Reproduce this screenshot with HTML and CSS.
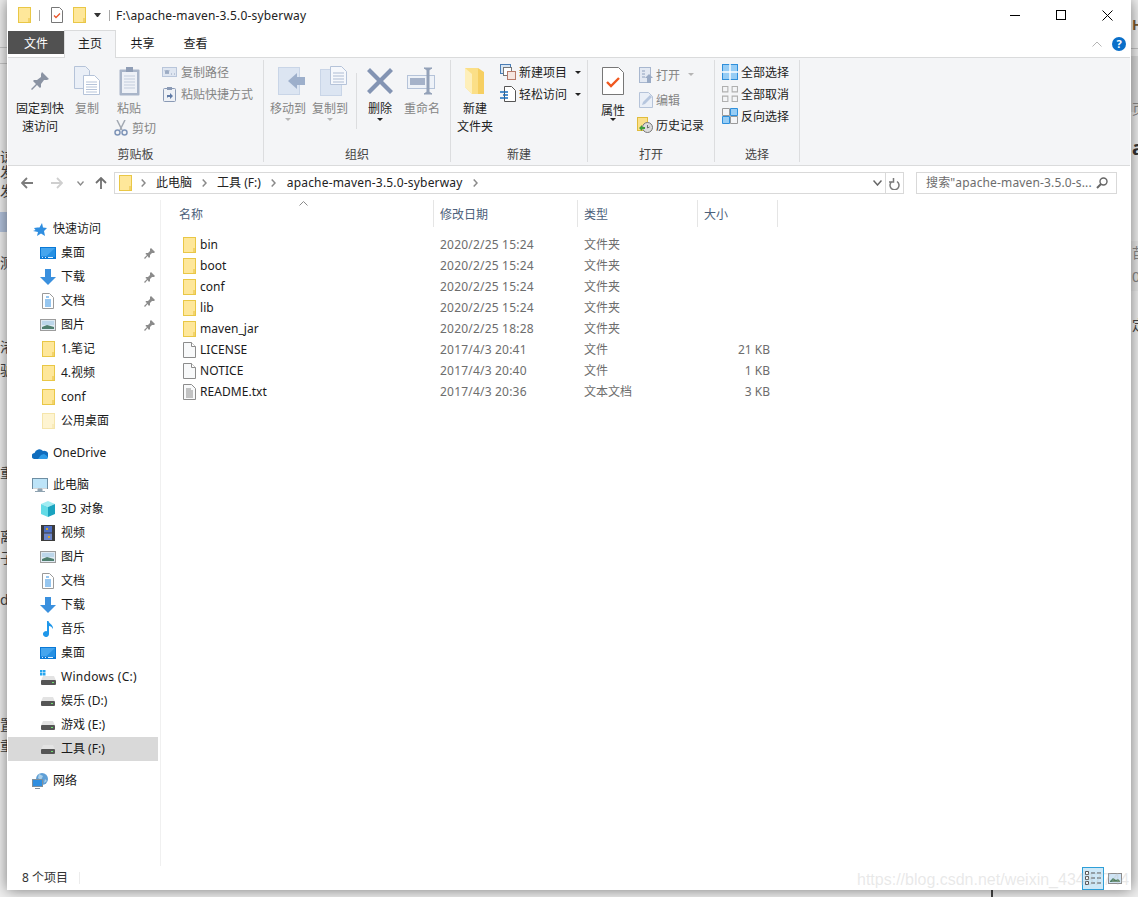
FILE: index.html
```html
<!DOCTYPE html>
<html lang="zh">
<head>
    <meta charset="utf-8">
    <title>apache-maven-3.5.0-syberway</title>
    <link rel="stylesheet" href="styles.css">
</head>
<body>
    <svg class="sprite" width="0" height="0">
        <symbol id="i-folder" viewBox="0 0 13 16"><rect x=".5" y=".5" width="12" height="15" fill="#fee79a" stroke="#e9c746"/><rect x="10" y="11" width="2" height="4" fill="#f3d36b"/></symbol>
        <symbol id="i-file" viewBox="0 0 13 16"><path d="M.5.5h8l4 4v11H.5z" fill="#f8f9fa" stroke="#8c8c8c"/><path d="M8.5.5v4h4" fill="#fff" stroke="#8c8c8c"/></symbol>
        <symbol id="i-txt" viewBox="0 0 13 16"><path d="M.5.5h8l4 4v11H.5z" fill="#f8f9fa" stroke="#8c8c8c"/><path d="M3 5h5M3 7h7M3 9h7M3 11h7M3 13h7" stroke="#8c8c8c"/></symbol>
        <symbol id="i-check" viewBox="0 0 12 16"><path d="M.5.5h8l3 3v12H.5z" fill="#fff" stroke="#777"/><path d="M3 8.5l2 2 4-4" fill="none" stroke="#e9552a" stroke-width="1.3"/></symbol>
        <symbol id="i-pin" viewBox="0 0 20 20"><path d="M12 1l7 7-2 1-3 0-3 4 0 3-1 1-3-3-5 5-1-1 5-5-3-3 1-1 3 0 4-3 0-3z" fill="#8a93a3"/></symbol>
        <symbol id="i-pin-sm" viewBox="0 0 11 11"><path d="M7 0l4 4-1 1H8L6 7v2L5 10 3.500 8 1 11 0 10l3-3L1.500 6 2 5h2l2-2V1z" fill="#8b8b8b"/></symbol>
        <symbol id="i-copy" viewBox="0 0 26 29"><path d="M.5.5h11l4 4v18H.5z" fill="#eaeff7" stroke="#b5c3d9"/><path d="M9.500 9.500h11l5 5v14h-16z" fill="#fff" stroke="#b5c3d9"/><path d="M12 16h11M12 18.500h11M12 21h11M12 23.500h11M12 26h11" stroke="#b5c3d9"/></symbol>
        <symbol id="i-paste" viewBox="0 0 21 30"><rect x=".5" y="3.500" width="20" height="26" rx="1" fill="#a9b5c9"/><rect x="3" y="6" width="15" height="21" fill="#eef1f7"/><path d="M5 10h11M5 13h11M5 16h11M5 19h11M5 22h11" stroke="#c3cddd"/><rect x="7" y="1" width="7" height="5" fill="#8f9db5"/></symbol>
        <symbol id="i-scissors" viewBox="0 0 14 16"><path d="M3 0l5 10M11 0L6 10" stroke="#a3a9b3" stroke-width="1.500"/><circle cx="3.500" cy="12.500" r="2.500" fill="none" stroke="#7f95b8" stroke-width="1.500"/><circle cx="10.500" cy="12.500" r="2.500" fill="none" stroke="#7f95b8" stroke-width="1.500"/></symbol>
        <symbol id="i-path" viewBox="0 0 15 10"><rect x=".5" y=".5" width="14" height="9" fill="#dfe6f1" stroke="#b8c5da"/><path d="M3 3l1 4 1-4 1 4 1-4M9 7h1M12 7h1" fill="none" stroke="#8495b2" stroke-width=".8"/></symbol>
        <symbol id="i-shortcut" viewBox="0 0 13 16"><rect x=".5" y="2.500" width="12" height="13" rx="1" fill="#eef1f6" stroke="#8a9ab5"/><rect x="4" y="1" width="5" height="3" fill="#8a9ab5"/><path d="M4 12V9h3V7l3 3-3 3v-2H5z" fill="#5f7aa6"/></symbol>
        <symbol id="i-move" viewBox="0 0 27 28"><rect x=".5" y=".5" width="21" height="27" fill="#dce5f2" stroke="#c9d5e7"/><path d="M10 14l9-8v4h8v8h-8v4z" fill="#9dafcb"/></symbol>
        <symbol id="i-copyto" viewBox="0 0 27 30"><rect x=".5" y="3.500" width="21" height="26" fill="#dce5f2" stroke="#c9d5e7"/><path d="M10.500.5h11l5 5v13h-16z" fill="#f6f8fc" stroke="#b5c3d9"/><path d="M13 7h11M13 10h11M13 13h11M13 16h11" stroke="#aebcd3"/></symbol>
        <symbol id="i-delete" viewBox="0 0 26 26"><path d="M3 0l10 10L23 0l3 3-10 10 10 10-3 3-10-10L3 26l-3-3 10-10L0 3z" fill="#8394b3"/></symbol>
        <symbol id="i-rename" viewBox="0 0 30 28"><rect x=".5" y="8.500" width="27" height="13" fill="#eef2f8" stroke="#b5c3d9"/><rect x="3" y="11" width="15" height="7" fill="#a5b2c9"/><path d="M17 1h8l-3 2v22l3 2h-8l3-2V3z" fill="#93a1b8" stroke="#93a1b8"/></symbol>
        <symbol id="i-newfolder" viewBox="0 0 20 28"><path d="M0 1h13v4h6v22H7L0 20z" fill="#fbdf87"/><path d="M13 1l6 4v22h-6z" fill="#f6cf62"/><path d="M0 1l7 6v20L0 20z" fill="#feefba"/></symbol>
        <symbol id="i-newitem" viewBox="0 0 16 16"><rect x=".5" y=".5" width="10" height="9" fill="#d8e6f4" stroke="#4a7db5"/><rect x="3.500" y="3.500" width="8" height="8" fill="#fff" stroke="#777"/><rect x="7.500" y="7.500" width="8" height="8" fill="#f6e6e0" stroke="#b87b6a"/></symbol>
        <symbol id="i-easy" viewBox="0 0 16 16"><path d="M4.500.5h7l4 4v11h-11z" fill="#fff" stroke="#555"/><path d="M0 6h8M3 9h5M0 12h8" stroke="#1a6fc0" stroke-width="1.300"/></symbol>
        <symbol id="i-props" viewBox="0 0 22 28"><path d="M.5.5h16l5 5v22H.5z" fill="#fff" stroke="#777"/><path d="M5 15l4 4 8-8" fill="none" stroke="#f0581f" stroke-width="2.400"/></symbol>
        <symbol id="i-open" viewBox="0 0 14 16"><rect x=".5" y=".5" width="11" height="15" fill="#e3e9f3" stroke="#a8b7cf"/><path d="M3 4h3M3 7h3M3 10h3" stroke="#8ea0bd"/><path d="M10 7l4 4h-2v5H8v-5H6z" fill="#9aabc6"/></symbol>
        <symbol id="i-edit" viewBox="0 0 14 16"><path d="M.5.5h9l4 4v11H.5z" fill="#eaeff7" stroke="#b5c3d9"/><path d="M3 13l1-3 7-7 2 2-7 7z" fill="#b6c6de"/></symbol>
        <symbol id="i-history" viewBox="0 0 16 16"><rect x=".5" y=".5" width="10" height="13" fill="#fbe08a" stroke="#e0bc3d"/><circle cx="10.500" cy="10.500" r="5" fill="#ddd" stroke="#777"/><path d="M10.500 8v3l2-1" fill="none" stroke="#555" stroke-width=".8"/><path d="M2 11l3-3v2h3v2H5v2z" fill="#3e9e3a"/></symbol>
        <symbol id="i-selall" viewBox="0 0 16 16"><rect x=".5" y=".5" width="15" height="15" fill="#97cdf5" stroke="#2f8fdb"/><path d="M8 0v16M0 8h16" stroke="#fff" stroke-width="1.400"/></symbol>
        <symbol id="i-selnone" viewBox="0 0 15 15"><path d="M.5.5h5v5h-5zM9.500.5h5v5h-5zM.5 9.500h5v5h-5zM9.500 9.500h5v5h-5z" fill="none" stroke="#b0b0b0"/></symbol>
        <symbol id="i-selinv" viewBox="0 0 16 16"><path d="M8.500.5h7v7h-7z" fill="#97cdf5" stroke="#2f8fdb"/><path d="M.5 8.500h7v7h-7z" fill="#97cdf5" stroke="#2f8fdb"/><path d="M.5.5h7v7h-7zM8.500 8.500h7v7h-7z" fill="none" stroke="#9a9a9a"/></symbol>
        <symbol id="i-chev" viewBox="0 0 5 8"><path d="M.7.5L4 4 .7 7.500" fill="none" stroke="#8a8a8a" stroke-width="1.500"/></symbol>
        <symbol id="i-search" viewBox="0 0 12 12"><circle cx="7.500" cy="4.500" r="3.500" fill="none" stroke="#666" stroke-width="1.400"/><path d="M5 7l-4 4" stroke="#666" stroke-width="2"/></symbol>
        <symbol id="i-star" viewBox="0 0 14 13"><path d="M9 0l1 4.500 4 .5-3 3 1 5-4-2.500L4 13l1-4-5-1 2.500-1L1 5l3.500-.5h2z" fill="#2f8ee0"/></symbol>
        <symbol id="i-desktop" viewBox="0 0 16 12"><rect width="16" height="12" fill="#0a79d6"/><path d="M1 1h14v8.500H1z" fill="#45a5ee"/><path d="M15 1v8.500H6z" fill="#2590e3"/><path d="M2 10.500h1M5 10.500h1M8 10.500h5" stroke="#e3f2ff"/></symbol>
        <symbol id="i-down" viewBox="0 0 16 16"><path d="M5 0h6v8h5l-8 8-8-8h5z" fill="#3a90de"/></symbol>
        <symbol id="i-doc" viewBox="0 0 12 16"><path d="M.5.5h7l4 4v11H.5z" fill="#fff" stroke="#9a9a9a"/><path d="M3 7h6M3 9h6M3 11h6M3 13h6M4 4h3" stroke="#2f8ee0"/></symbol>
        <symbol id="i-pics" viewBox="0 0 16 12"><rect x=".5" y=".5" width="15" height="11" fill="#dfeaf3" stroke="#9c9c9c"/><rect x="2" y="2" width="12" height="4" fill="#bcd6ea"/><path d="M2 8l5-2 7 2v2H2z" fill="#4f7f6f"/></symbol>
        <symbol id="i-cloud" viewBox="0 0 16 11"><path d="M3 11a3 3 0 0 1-.5-6A5 5 0 0 1 11 3a3.800 3.800 0 0 1 2.500 8z" fill="#0f6cbd"/><path d="M6 11l3-4 3-1 3 2 1 2-1 1z" fill="#2d9be8"/></symbol>
        <symbol id="i-pc" viewBox="0 0 16 15"><rect x=".5" y=".5" width="15" height="10" fill="#bde4f8" stroke="#6e8ea3"/><path d="M1 10.500h14" stroke="#d6d6d6"/><path d="M6 11h4v2H6zM3 13.500h10" fill="#8fa3b1" stroke="#8fa3b1"/></symbol>
        <symbol id="i-cube" viewBox="0 0 16 16"><path d="M8 0l7 3-7 3-7-3z" fill="#a0ecf2"/><path d="M1 3l7 3v10l-7-3z" fill="#63dbe6"/><path d="M15 3L8 6v10l7-3z" fill="#1aa3bf"/></symbol>
        <symbol id="i-film" viewBox="0 0 14 16"><rect width="14" height="16" fill="#3c3c3c"/><rect x="3" y="1" width="8" height="6.500" fill="#4d6fc4"/><rect x="3" y="8.500" width="8" height="6.500" fill="#6d86c9"/><path d="M5 3h2v2H5zM7 11h2v2H7z" fill="#d6a32c"/></symbol>
        <symbol id="i-music" viewBox="0 0 12 16"><path d="M5 0h1.500c.5 3 5 3.500 4.500 8-1-2-2.500-3-4-3v8a3 3 0 1 1-2-2.800z" fill="#1f97ea"/></symbol>
        <symbol id="i-drive" viewBox="0 0 14 9"><path d="M2 0h10l2 4.500H0z" fill="#e3e3e3"/><rect y="4" width="14" height="5" rx="1" fill="#555"/><rect x="10" y="6" width="2" height="1" fill="#6fe06f"/></symbol>
        <symbol id="i-windrive" viewBox="0 0 16 15"><rect width="2.500" height="2.500" fill="#27a6ef"/><rect x="3" width="2.500" height="2.500" fill="#27a6ef"/><rect y="3" width="2.500" height="2.500" fill="#27a6ef"/><rect x="3" y="3" width="2.500" height="2.500" fill="#27a6ef"/><path d="M3 6h11l2 4.500H1z" fill="#e3e3e3"/><rect x="1" y="10" width="15" height="5" rx="1" fill="#555"/><rect x="12" y="12" width="2" height="1" fill="#6fe06f"/></symbol>
        <symbol id="i-net" viewBox="0 0 16 16"><circle cx="10" cy="6" r="6" fill="#5f9fd6"/><path d="M7 1l4 2-2 4-3-2zM13 6l2 2-3 2z" fill="#a9cfe9"/><rect x=".5" y="6.500" width="10" height="7" fill="#2f8ee0" stroke="#7f8f9c"/><path d="M3 15.500h5" stroke="#7f8f9c"/></symbol>
        <symbol id="i-details" viewBox="0 0 16 14"><path d="M.5.5h3v3h-3zM.5 5.500h3v3h-3zM.5 10.500h3v3h-3z" fill="#fff" stroke="#555"/><path d="M6 2h4M12 2h4M6 7h4M12 7h4M6 12h4M12 12h4" stroke="#555"/></symbol>
        <symbol id="i-thumbs" viewBox="0 0 14 11"><rect x=".5" y=".5" width="13" height="10" fill="#cfe4f5" stroke="#8c8c8c"/><path d="M2 8l3-3 3 2 2-1 2 2v1H2z" fill="#4f7f5f"/></symbol>
    </svg>

    <div class="behind">
        <div class="strip-line left-line"></div>
        <div class="left-sel"></div>
        <span class="frag f1">谅</span><span class="frag f2">发</span><span class="frag f3">发</span>
        <span class="frag f4">测</span><span class="frag f5">渚</span><span class="frag f6">驴</span>
        <span class="frag f7">重</span><span class="frag f8">离</span><span class="frag f9">子</span>
        <span class="frag f10">da</span><span class="frag f11">置</span><span class="frag f12">重</span>
        <div class="right-top"></div>
        <div class="right-mid"></div>
        <div class="right-line"></div>
        <span class="frag-r r1">HI</span><span class="frag-r r2">页</span><span class="frag-r r3">a</span>
        <span class="frag-r r4">苗</span><span class="frag-r r5">0</span><span class="frag-r r6">定</span>
        <div class="bottom-line"></div>
    </div>

    <div class="window">
        <!-- title bar -->
        <div class="titlebar">
            <svg class="qa-first" width="13" height="16"><use href="#i-folder"/></svg>
            <span class="qa-sep"></span>
            <svg class="qa-check" width="12" height="16"><use href="#i-check"/></svg>
            <svg class="qa-folder" width="13" height="16"><use href="#i-folder"/></svg>
            <span class="qa-down"></span>
            <span class="qa-sep qa-sep2"></span>
            <span class="title-text">F:\apache-maven-3.5.0-syberway</span>
            <div class="win-btns">
                <div class="win-btn"><svg width="10" height="10"><path d="M0 5.500h10" stroke="#000"/></svg></div>
                <div class="win-btn"><svg width="10" height="10"><rect x=".5" y=".5" width="9" height="9" fill="none" stroke="#000"/></svg></div>
                <div class="win-btn"><svg width="11" height="11"><path d="M.5.5l10 10M10.500.5l-10 10" stroke="#000"/></svg></div>
            </div>
        </div>

        <!-- tabs -->
        <div class="tabs">
            <div class="tab tab-file">文件</div>
            <div class="tab tab-active">主页</div>
            <div class="tab tab-plain">共享</div>
            <div class="tab tab-plain">查看</div>
            <div class="tab-right">
                <svg width="10" height="6"><path d="M.5 5.500L5 1l4.500 4.500" fill="none" stroke="#b5b5b5"/></svg>
                <div class="help">?</div>
            </div>
        </div>

        <!-- ribbon -->
        <div class="ribbon">
            <div class="group g-clip">
                <div class="group-body">
                    <div class="big w48">
                        <div class="big-icon"><svg width="20" height="20"><use href="#i-pin"/></svg></div>
                        <div class="big-label">固定到快<br>速访问</div>
                    </div>
                    <div class="big w46 off">
                        <div class="big-icon"><svg width="26" height="29"><use href="#i-copy"/></svg></div>
                        <div class="big-label">复制</div>
                    </div>
                    <div class="paste-col">
                        <div class="big w34 off">
                            <div class="big-icon"><svg width="21" height="30"><use href="#i-paste"/></svg></div>
                            <div class="big-label">粘贴</div>
                        </div>
                        <div class="small off cut"><svg width="14" height="16"><use href="#i-scissors"/></svg>剪切</div>
                    </div>
                    <div class="small-col col-clip">
                        <div class="small off"><svg width="15" height="10"><use href="#i-path"/></svg>复制路径</div>
                        <div class="small off"><svg width="13" height="16"><use href="#i-shortcut"/></svg>粘贴快捷方式</div>
                    </div>
                </div>
                <div class="group-label">剪贴板</div>
            </div>

            <div class="group g-org">
                <div class="group-body">
                    <div class="big w42 off">
                        <div class="big-icon nudge"><svg width="27" height="28"><use href="#i-move"/></svg></div>
                        <div class="big-label">移动到</div>
                        <span class="caret caret-off"></span>
                    </div>
                    <div class="big w42 off">
                        <div class="big-icon nudge"><svg width="27" height="30"><use href="#i-copyto"/></svg></div>
                        <div class="big-label">复制到</div>
                        <span class="caret caret-off"></span>
                    </div>
                    <div class="inner-sep"></div>
                    <div class="big w42">
                        <div class="big-icon"><svg width="26" height="26"><use href="#i-delete"/></svg></div>
                        <div class="big-label">删除</div>
                        <span class="caret"></span>
                    </div>
                    <div class="big w42 off">
                        <div class="big-icon"><svg width="30" height="28"><use href="#i-rename"/></svg></div>
                        <div class="big-label">重命名</div>
                    </div>
                </div>
                <div class="group-label">组织</div>
            </div>

            <div class="group g-new">
                <div class="group-body">
                    <div class="big w42">
                        <div class="big-icon"><svg width="20" height="28"><use href="#i-newfolder"/></svg></div>
                        <div class="big-label">新建<br>文件夹</div>
                    </div>
                    <div class="small-col col-new">
                        <div class="small"><svg width="16" height="16"><use href="#i-newitem"/></svg>新建项目<span class="caret caret-side"></span></div>
                        <div class="small"><svg width="16" height="16"><use href="#i-easy"/></svg>轻松访问<span class="caret caret-side"></span></div>
                    </div>
                </div>
                <div class="group-label">新建</div>
            </div>

            <div class="group g-open">
                <div class="group-body">
                    <div class="big w34">
                        <div class="big-icon"><svg width="22" height="28"><use href="#i-props"/></svg></div>
                        <div class="big-label props-label">属性</div>
                        <span class="caret"></span>
                    </div>
                    <div class="small-col col-open">
                        <div class="small off"><svg width="14" height="16"><use href="#i-open"/></svg>打开<span class="caret caret-side caret-off"></span></div>
                        <div class="small off"><svg width="14" height="16"><use href="#i-edit"/></svg>编辑</div>
                        <div class="small"><svg class="history" width="16" height="16"><use href="#i-history"/></svg>历史记录</div>
                    </div>
                </div>
                <div class="group-label">打开</div>
            </div>

            <div class="group g-sel">
                <div class="group-body">
                    <div class="small-col col-sel">
                        <div class="small"><svg width="16" height="16"><use href="#i-selall"/></svg>全部选择</div>
                        <div class="small"><svg width="16" height="16"><use href="#i-selnone"/></svg>全部取消</div>
                        <div class="small"><svg width="16" height="16"><use href="#i-selinv"/></svg>反向选择</div>
                    </div>
                </div>
                <div class="group-label">选择</div>
            </div>
        </div>

        <!-- address row -->
        <div class="addr-row">
            <div class="nav-btns">
                <svg width="12" height="12"><path d="M6 1L1 6l5 5M1 6h11" fill="none" stroke="#7c7c7c" stroke-width="1.800"/></svg>
                <svg class="nav-fwd" width="12" height="12"><path d="M6 1l5 5-5 5M11 6H0" fill="none" stroke="#cfcfcf" stroke-width="1.800"/></svg>
                <svg class="nav-hist" width="7" height="5"><path d="M.5.5L3.500 4l3-3.500" fill="none" stroke="#8a8a8a" stroke-width="1.300"/></svg>
                <svg class="nav-up" width="12" height="12"><path d="M1 6l5-5 5 5M6 1v11" fill="none" stroke="#707070" stroke-width="1.800"/></svg>
            </div>
            <div class="addr-box">
                <svg class="addr-folder" width="13" height="16"><use href="#i-folder"/></svg>
                <svg class="crumb-chev" width="5" height="8"><use href="#i-chev"/></svg>
                <span class="crumb">此电脑</span>
                <svg class="crumb-chev" width="5" height="8"><use href="#i-chev"/></svg>
                <span class="crumb">工具 (F:)</span>
                <svg class="crumb-chev" width="5" height="8"><use href="#i-chev"/></svg>
                <span class="crumb crumb-path">apache-maven-3.5.0-syberway</span>
                <svg class="crumb-chev" width="5" height="8"><use href="#i-chev"/></svg>
                <svg class="addr-drop" width="9" height="6"><path d="M.5.500L4.500 5l4-4.500" fill="none" stroke="#666" stroke-width="1.500"/></svg>
                <div class="addr-refresh">
                    <svg width="11" height="13"><path d="M3 3.500a4.500 4.500 0 1 0 5 0M4.500 0v4H0" fill="none" stroke="#7a7a7a" stroke-width="1.500" transform="translate(0 1)"/></svg>
                </div>
            </div>
            <div class="search-box">
                <span class="search-text">搜索"apache-maven-3.5.0-s...</span>
                <svg width="12" height="12"><use href="#i-search"/></svg>
            </div>
        </div>

        <!-- main -->
        <div class="main">
            <div class="sidebar">
                <div class="nav-row"><svg width="14" height="13"><use href="#i-star"/></svg><span>快速访问</span></div>
                <div class="nav-row child"><svg width="16" height="12"><use href="#i-desktop"/></svg><span>桌面</span><svg class="nav-pin" width="11" height="11"><use href="#i-pin-sm"/></svg></div>
                <div class="nav-row child"><svg width="16" height="16"><use href="#i-down"/></svg><span>下载</span><svg class="nav-pin" width="11" height="11"><use href="#i-pin-sm"/></svg></div>
                <div class="nav-row child"><svg width="12" height="16"><use href="#i-doc"/></svg><span>文档</span><svg class="nav-pin" width="11" height="11"><use href="#i-pin-sm"/></svg></div>
                <div class="nav-row child"><svg width="16" height="12"><use href="#i-pics"/></svg><span>图片</span><svg class="nav-pin" width="11" height="11"><use href="#i-pin-sm"/></svg></div>
                <div class="nav-row child"><svg width="13" height="16"><use href="#i-folder"/></svg><span>1.笔记</span></div>
                <div class="nav-row child"><svg width="13" height="16"><use href="#i-folder"/></svg><span>4.视频</span></div>
                <div class="nav-row child"><svg width="13" height="16"><use href="#i-folder"/></svg><span>conf</span></div>
                <div class="nav-row child"><svg class="faded" width="13" height="16"><use href="#i-folder"/></svg><span>公用桌面</span></div>

                <div class="nav-row section"><svg width="16" height="11"><use href="#i-cloud"/></svg><span>OneDrive</span></div>

                <div class="nav-row section"><svg width="16" height="15"><use href="#i-pc"/></svg><span>此电脑</span></div>
                <div class="nav-row child"><svg width="16" height="16"><use href="#i-cube"/></svg><span>3D 对象</span></div>
                <div class="nav-row child"><svg width="14" height="16"><use href="#i-film"/></svg><span>视频</span></div>
                <div class="nav-row child"><svg width="16" height="12"><use href="#i-pics"/></svg><span>图片</span></div>
                <div class="nav-row child"><svg width="12" height="16"><use href="#i-doc"/></svg><span>文档</span></div>
                <div class="nav-row child"><svg width="16" height="16"><use href="#i-down"/></svg><span>下载</span></div>
                <div class="nav-row child"><svg width="12" height="16"><use href="#i-music"/></svg><span>音乐</span></div>
                <div class="nav-row child"><svg width="16" height="12"><use href="#i-desktop"/></svg><span>桌面</span></div>
                <div class="nav-row child"><svg width="16" height="15"><use href="#i-windrive"/></svg><span class="wide">Windows (C:)</span></div>
                <div class="nav-row child"><svg width="16" height="9"><use href="#i-drive"/></svg><span>娱乐 (D:)</span></div>
                <div class="nav-row child"><svg width="16" height="9"><use href="#i-drive"/></svg><span>游戏 (E:)</span></div>
                <div class="nav-row child selected"><svg width="16" height="9"><use href="#i-drive"/></svg><span>工具 (F:)</span></div>

                <div class="nav-row section"><svg width="16" height="16"><use href="#i-net"/></svg><span>网络</span></div>
            </div>

            <div class="files">
                <div class="file-head">
                    <div class="col col-name">名称
                        <svg class="sort-caret" width="9" height="5"><path d="M.5 4.500L4.500.5l4 4" fill="none" stroke="#8a8a8a"/></svg>
                    </div>
                    <div class="col">修改日期</div>
                    <div class="col">类型</div>
                    <div class="col">大小</div>
                </div>
                <div class="file-list">
                    <div class="file-row"><div class="name"><svg width="13" height="16"><use href="#i-folder"/></svg>bin</div><div class="meta date">2020/2/25 15:24</div><div class="meta kind">文件夹</div><div class="meta size"></div></div>
                    <div class="file-row"><div class="name"><svg width="13" height="16"><use href="#i-folder"/></svg>boot</div><div class="meta date">2020/2/25 15:24</div><div class="meta kind">文件夹</div><div class="meta size"></div></div>
                    <div class="file-row"><div class="name"><svg width="13" height="16"><use href="#i-folder"/></svg>conf</div><div class="meta date">2020/2/25 15:24</div><div class="meta kind">文件夹</div><div class="meta size"></div></div>
                    <div class="file-row"><div class="name"><svg width="13" height="16"><use href="#i-folder"/></svg>lib</div><div class="meta date">2020/2/25 15:24</div><div class="meta kind">文件夹</div><div class="meta size"></div></div>
                    <div class="file-row"><div class="name"><svg width="13" height="16"><use href="#i-folder"/></svg>maven_jar</div><div class="meta date">2020/2/25 18:28</div><div class="meta kind">文件夹</div><div class="meta size"></div></div>
                    <div class="file-row"><div class="name"><svg width="13" height="16"><use href="#i-file"/></svg>LICENSE</div><div class="meta date">2017/4/3 20:41</div><div class="meta kind">文件</div><div class="meta size">21 KB</div></div>
                    <div class="file-row"><div class="name"><svg width="13" height="16"><use href="#i-file"/></svg>NOTICE</div><div class="meta date">2017/4/3 20:40</div><div class="meta kind">文件</div><div class="meta size">1 KB</div></div>
                    <div class="file-row"><div class="name"><svg width="13" height="16"><use href="#i-txt"/></svg>README.txt</div><div class="meta date">2017/4/3 20:36</div><div class="meta kind">文本文档</div><div class="meta size">3 KB</div></div>
                </div>
            </div>
        </div>

        <!-- status bar -->
        <div class="status">
            <span class="status-count">8 个项目</span>
            <span class="status-sep"></span>
            <div class="views">
                <div class="view-btn active"><svg width="16" height="14"><use href="#i-details"/></svg></div>
                <svg class="view-thumb" width="14" height="11"><use href="#i-thumbs"/></svg>
            </div>
        </div>
    </div>

    <div class="watermark">https://blog.csdn.net/weixin_43487744</div>
</body>
</html>
```

FILE: styles.css
```css
* {
    box-sizing: border-box;
}

html, body {
    margin: 0;
    height: 897px;
    overflow: hidden;
}

body {
    position: relative;
    background-color: #f1f1f1;
    font-family: "Noto Sans", "Noto Sans CJK SC", sans-serif;
    font-size: 12px;
    color: #1a1a1a;
}

svg {
    flex: none;
    display: block;
}

.sprite {
    position: absolute;
}

/* whatever shows behind the window */
.behind {
    position: absolute;
    inset: 0;
    overflow: hidden;
    background-color: #f0f0f0;
}

.left-line {
    position: absolute;
    left: 0;
    top: 47px;
    width: 8px;
    height: 17px;
    border-top: 1px solid #c8c8c8;
    border-bottom: 1px solid #c8c8c8;
}

.left-sel {
    position: absolute;
    left: 0;
    top: 212px;
    width: 8px;
    height: 20px;
    background-color: #b4c4de;
}

.frag, .frag-r {
    position: absolute;
    font-size: 14px;
    line-height: 14px;
    color: #444;
}

.frag { left: 0; }
.f1 { top: 150px; }
.f2 { top: 165px; }
.f3 { top: 184px; }
.f4 { top: 256px; }
.f5 { top: 340px; }
.f6 { top: 363px; }
.f7 { top: 466px; }
.f8 { top: 530px; }
.f9 { top: 551px; }
.f10 { top: 593px; }
.f11 { top: 718px; }
.f12 { top: 739px; }

.right-top {
    position: absolute;
    left: 1131px;
    top: 56px;
    width: 7px;
    height: 56px;
    background-color: #dcdcdc;
}

.right-mid {
    position: absolute;
    left: 1131px;
    top: 241px;
    width: 7px;
    height: 50px;
    background-color: #e8e8e8;
}

.right-line {
    position: absolute;
    left: 1131px;
    top: 48px;
    width: 7px;
    height: 1px;
    background-color: #c4c4c4;
}

.frag-r { left: 1132px; }
.r1 { top: 18px; color: #7a5a30; font-weight: bold; }
.r2 { top: 102px; color: #888; }
.r3 { top: 138px; font-size: 20px; line-height: 20px; font-weight: bold; color: #333; }
.r4 { top: 246px; color: #888; }
.r5 { top: 270px; color: #888; }
.r6 { top: 318px; }

.bottom-line {
    position: absolute;
    left: 991px;
    top: 890px;
    width: 2px;
    height: 7px;
    background-color: #444;
}

/* window */
.window {
    position: relative;
    display: flex;
    flex-direction: column;
    margin-left: 7px;
    width: 1124px;
    height: 890px;
    border-left: 1px solid #fff;
    border-right: 1px solid #fff;
    background-color: #fff;
    box-shadow: 0 0 14px rgba(0, 0, 0, 0.5);
}

.titlebar {
    display: flex;
    align-items: center;
    height: 30px;
    padding-left: 10px;
    flex: none;
}

.qa-sep {
    width: 1px;
    height: 11px;
    margin-left: 8px;
    background-color: #a8a8a8;
}

.qa-check {
    margin-left: 11px;
}

.qa-folder {
    margin-left: 10px;
}

.qa-down {
    width: 7px;
    height: 4px;
    margin-left: 8px;
    border-left: 3.5px solid transparent;
    border-right: 3.5px solid transparent;
    border-top: 4px solid #333;
}

.qa-sep2 {
    margin-left: 8px;
}

.title-text {
    margin-left: 6px;
    letter-spacing: 0.18px;
    color: #222;
}

.win-btns {
    display: flex;
    margin-left: auto;
}

.win-btn {
    display: flex;
    align-items: center;
    justify-content: center;
    width: 46px;
    height: 30px;
}

.tabs {
    display: flex;
    align-items: flex-start;
    height: 27px;
    flex: none;
}

.tab {
    display: flex;
    align-items: center;
    justify-content: center;
}

.tab-file {
    width: 56px;
    height: 23px;
    margin-top: 1px;
    background-color: #515151;
    color: #fff;
}

.tab-active {
    position: relative;
    width: 52px;
    height: 28px;
    padding-bottom: 3px;
    border: 1px solid #dadbdc;
    border-bottom: none;
    background-color: #f4f5f7;
    z-index: 1;
}

.tab-plain {
    width: 53px;
    height: 27px;
    padding-bottom: 2px;
}

.tab-right {
    display: flex;
    align-items: center;
    gap: 10px;
    height: 27px;
    margin-left: auto;
    margin-right: 4px;
}

.help {
    width: 14px;
    height: 14px;
    border-radius: 50%;
    background-color: #0a6fc9;
    color: #fff;
    font-size: 11px;
    line-height: 14px;
    font-weight: bold;
    text-align: center;
}

/* ribbon */
.ribbon {
    display: flex;
    height: 109px;
    flex: none;
    border-top: 1px solid #dadbdc;
    border-bottom: 1px solid #dadbdc;
    background-color: #f4f5f7;
}

.group {
    display: flex;
    flex-direction: column;
    margin-top: 2px;
    height: 102px;
    border-right: 1px solid #dcdddf;
}

.g-clip { width: 256px; padding-left: 8px; }
.g-org { width: 187px; padding-left: 3px; }
.g-new { width: 137px; padding-left: 3px; }
.g-open { width: 127px; padding-left: 8px; }
.g-sel { width: 85px; padding-left: 7px; }

.group-body {
    display: flex;
    flex: 1;
    min-height: 0;
}

.group-label {
    flex: none;
    height: 20px;
    line-height: 26px;
    text-align: center;
    color: #444;
    margin-left: -8px;
}

.g-org .group-label, .g-new .group-label { margin-left: -3px; }
.g-sel .group-label { margin-left: -7px; }

.big {
    display: flex;
    flex-direction: column;
    align-items: center;
    text-align: center;
}

.w48 { width: 48px; }
.w46 { width: 46px; }
.w42 { width: 42px; }
.w34 { width: 34px; }

.big-icon {
    display: flex;
    align-items: center;
    justify-content: center;
    height: 40px;
    padding-top: 1px;
}

.big-icon.nudge {
    padding-left: 6px;
}

.big-label {
    line-height: 18px;
    white-space: nowrap;
    color: #222;
}

.off .big-label, .small.off {
    color: #858585;
}

.props-label {
    margin-top: 2px;
    margin-bottom: -2px;
}

.caret {
    width: 0;
    height: 0;
    border-left: 3px solid transparent;
    border-right: 3px solid transparent;
    border-top: 3px solid #222;
}

.caret-off {
    border-top-color: #b5b5b5;
}

.caret-side {
    margin-left: 5px;
}

.paste-col {
    display: flex;
    flex-direction: column;
    width: 46px;
    margin-left: 2px;
}

.cut {
    margin-left: 2px;
    margin-top: -1px;
    gap: 3px;
}

.small-col {
    display: flex;
    flex-direction: column;
}

.small {
    display: flex;
    align-items: center;
    gap: 4px;
    height: 22px;
    white-space: nowrap;
    color: #222;
}

.col-clip { padding-top: 1px; margin-left: 4px; }
.col-clip .small svg[width="13"] { margin: 0 1px; }

.col-new { margin-left: 4px; padding-top: 1px; }
.col-new .small { gap: 3px; }

.col-open { margin-left: 9px; padding-top: 2px; }
.col-open .small { height: 25px; gap: 3px; }
.col-open .history { margin-left: -2px; }

.col-sel { padding-top: 1px; }
.col-sel .small { gap: 3px; }

.inner-sep {
    align-self: flex-start;
    width: 1px;
    height: 56px;
    margin: 13px 2px 0 5px;
    background-color: #dcdddf;
}

/* address row */
.addr-row {
    display: flex;
    align-items: flex-start;
    height: 34px;
    flex: none;
    padding-top: 6px;
}

.nav-btns {
    display: flex;
    align-items: center;
    width: 106px;
    height: 22px;
    padding-left: 13px;
}

.nav-fwd { margin-left: 18px; }
.nav-hist { margin-left: 14px; }
.nav-up { margin-left: 11px; }

.addr-box {
    display: flex;
    align-items: center;
    width: 790px;
    height: 22px;
    border: 1px solid #d9d9d9;
    padding-left: 4px;
}

.addr-folder {
    margin-right: -1px;
}

.crumb-chev {
    margin: 0 10px;
}

.crumb {
    padding-bottom: 2px;
    color: #222;
}

.crumb-path {
    margin-left: 1px;
    letter-spacing: 0.18px;
}

.addr-drop {
    margin-left: auto;
    margin-right: 3px;
}

.addr-refresh {
    display: flex;
    align-items: center;
    justify-content: center;
    width: 18px;
    height: 20px;
    border-left: 1px solid #d9d9d9;
}

.search-box {
    display: flex;
    align-items: center;
    justify-content: space-between;
    width: 201px;
    height: 22px;
    margin-left: 12px;
    padding: 0 8px 0 9px;
    border: 1px solid #d9d9d9;
}

.search-text {
    padding-bottom: 2px;
    letter-spacing: 0.15px;
    color: #6d6d6d;
    white-space: nowrap;
}

/* main */
.main {
    display: flex;
    flex: 1;
    min-height: 0;
}

.sidebar {
    width: 153px;
    flex: none;
    padding-top: 17px;
    border-right: 1px solid #f0f0f0;
}

.nav-row {
    display: flex;
    align-items: center;
    width: 150px;
    height: 24px;
    padding-left: 24px;
    color: #1a1a1a;
}

.nav-row span {
    padding-bottom: 2px;
}

.nav-row .wide {
    letter-spacing: 0.3px;
}

.nav-row > svg:first-child {
    margin-right: 5px;
}

/* icons narrower than the 16px slot are centred in it */
.nav-row > svg[width="14"]:first-child { margin-left: 1px; margin-right: 6px; }
.nav-row > svg[width="13"]:first-child { margin-left: 2px; margin-right: 6px; }
.nav-row > svg[width="12"]:first-child { margin-left: 2px; margin-right: 7px; }

.nav-row.child {
    padding-left: 32px;
}

.nav-row.section {
    margin-top: 8px;
}

.nav-row.selected {
    background-color: #d9d9d9;
}

.nav-pin {
    margin-left: auto;
    margin-right: 3px;
}

.faded {
    opacity: 0.45;
}

.files {
    flex: 1;
    min-width: 0;
}

.file-head, .file-row {
    display: grid;
    grid-template-columns: 273px 144px 120px 80px;
}

.file-head {
    height: 28px;
}

.col {
    display: flex;
    align-items: center;
    height: 27px;
    padding-left: 6px;
    border-right: 1px solid #e5e5e5;
    color: #4c607a;
}

.col-name {
    position: relative;
    padding-left: 18px;
}

.sort-caret {
    position: absolute;
    left: 138px;
    top: 1px;
}

.file-list {
    padding-top: 6px;
}

.file-row {
    height: 21px;
    align-items: center;
}

.name {
    display: flex;
    align-items: center;
    gap: 4px;
    padding-left: 22px;
    letter-spacing: 0.05px;
    color: #1a1a1a;
}

.meta {
    padding-left: 6px;
    color: #6d6d6d;
}

.meta.date {
    letter-spacing: 0.2px;
}

.meta.kind {
    padding-bottom: 2px;
}

.meta.size {
    padding-left: 0;
    padding-right: 8px;
    text-align: right;
}

/* status bar */
.status {
    display: flex;
    align-items: center;
    height: 24px;
    flex: none;
    padding: 0 8px 0 14px;
}

.status-count {
    padding-bottom: 2px;
    color: #333;
}

.status-sep {
    width: 1px;
    height: 12px;
    margin-left: 11px;
    background-color: #ececec;
}

.views {
    display: flex;
    align-items: center;
    margin-left: auto;
}

.view-btn {
    display: flex;
    align-items: center;
    justify-content: center;
    width: 22px;
    height: 23px;
    margin-right: 4px;
}

.view-btn.active {
    border: 1px solid #2e9fd8;
    background-color: #cde8f7;
}

.watermark {
    position: absolute;
    left: 857px;
    top: 868px;
    width: 272px;
    overflow: hidden;
    white-space: nowrap;
    font-family: "Liberation Sans", sans-serif;
    font-size: 16px;
    line-height: 24px;
    color: rgba(190, 190, 190, 0.35);
}
```
